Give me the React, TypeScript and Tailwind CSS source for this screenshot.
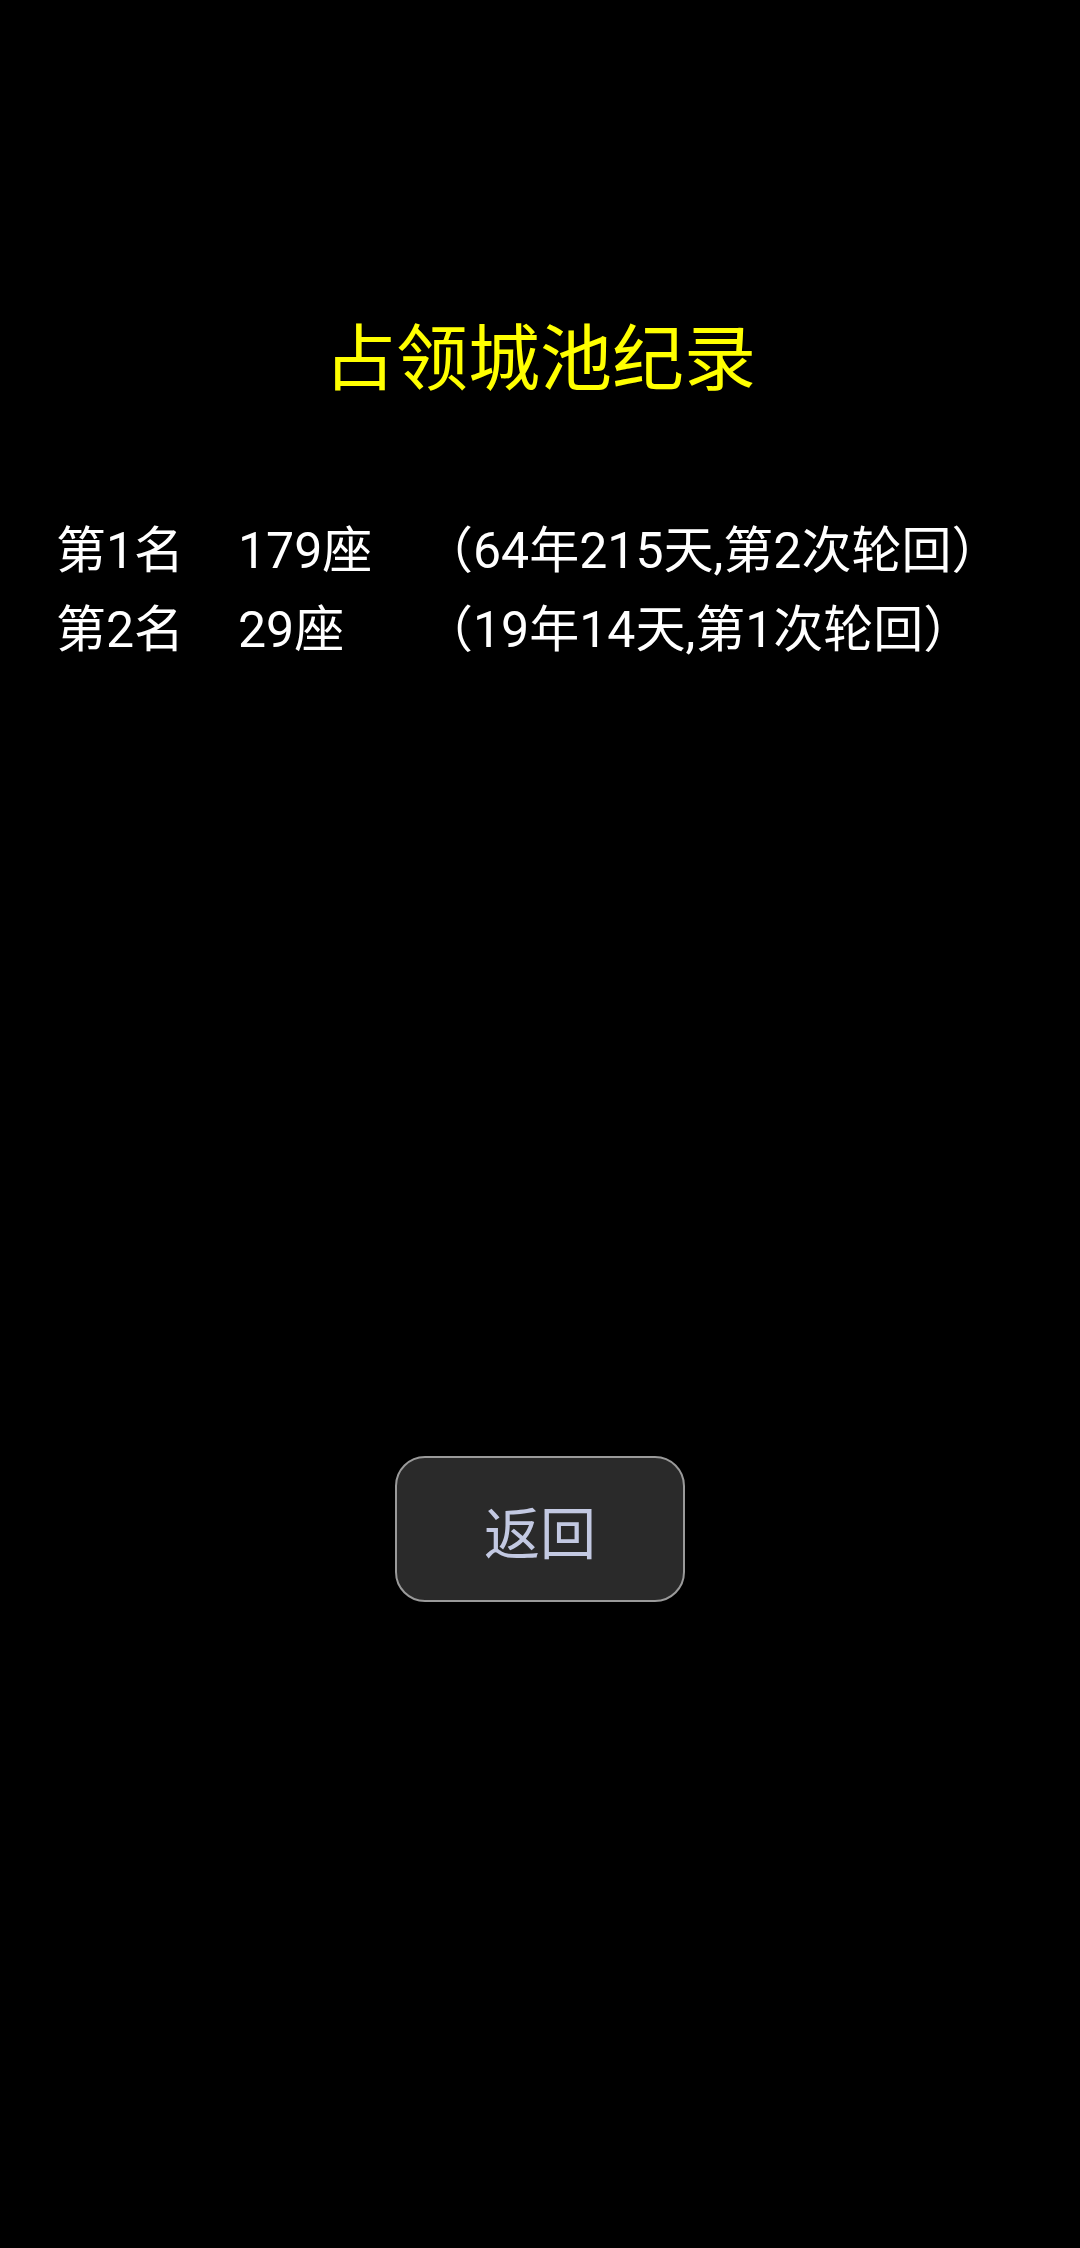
const records = [
  { rank: "第1名", count: "179座", detail: "（64年215天,第2次轮回）" },
  { rank: "第2名", count: "29座", detail: "（19年14天,第1次轮回）" },
];

export default function App() {
  return (
    <div
      className="w-[1080px] h-[2248px] bg-black flex flex-col items-center"
      style={{ fontFamily: "Roboto, 'Noto Sans CJK SC', sans-serif" }}
    >
      <h1 className="mt-[315px] text-[72px] leading-[90px] text-[#ffff00] font-normal">占领城池纪录</h1>

      <div className="self-stretch mt-[107px] pl-[56px] flex flex-col">
        {records.map((r) => (
          <div key={r.rank} className="flex text-[50px] leading-[79px] text-white">
            <span className="w-[182px] shrink-0">{r.rank}</span>
            <span className="w-[185px] shrink-0">{r.count}</span>
            <span className="whitespace-nowrap">{r.detail}</span>
          </div>
        ))}
      </div>

      <button className="mt-[786px] w-[290px] h-[146px] pt-[12px] rounded-[30px] border-2 border-[#9a9a9a] bg-[#2a2a2a] text-[56px] text-[#c3c9e2] flex items-center justify-center">
        返回
      </button>
    </div>
  );
}
